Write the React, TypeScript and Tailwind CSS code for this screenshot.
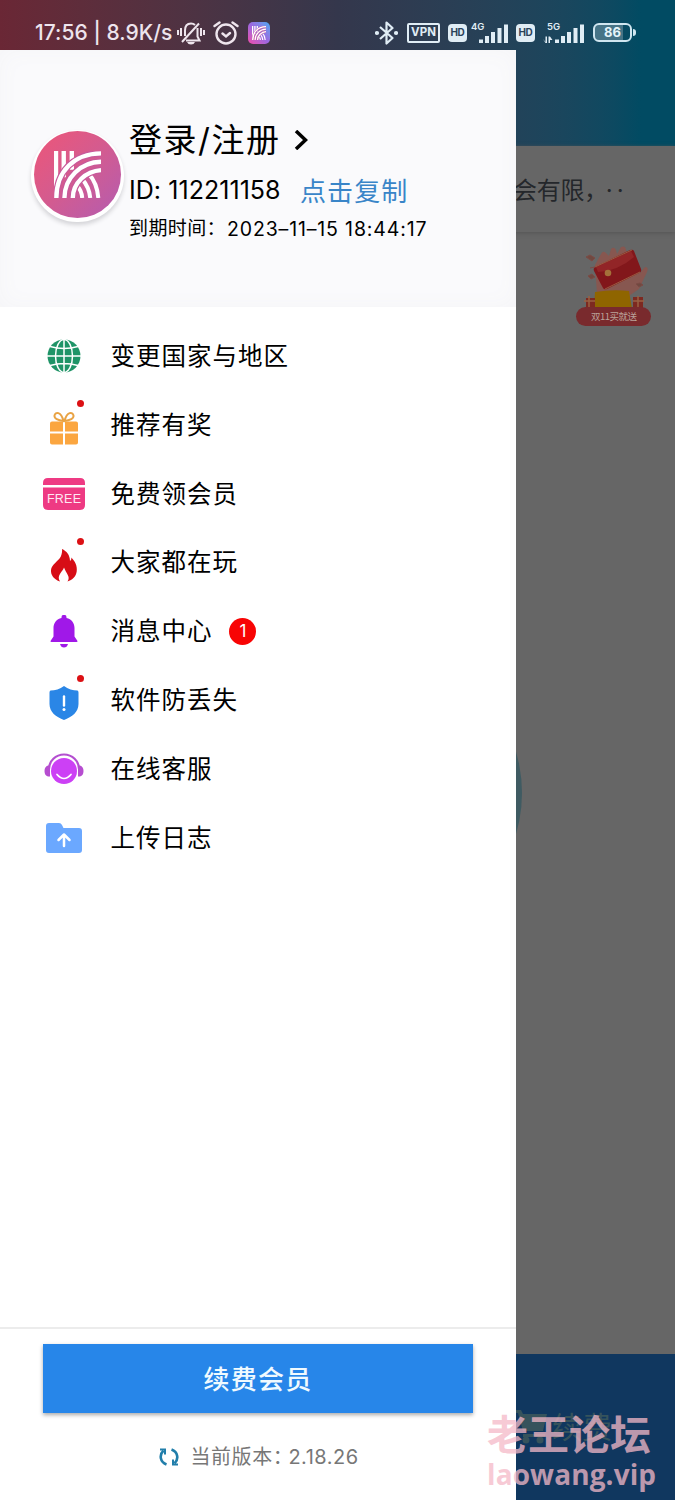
import React from 'react';

const GlobeIcon = () => (
  <svg width="34" height="34" viewBox="0 0 34 34" fill="none">
    <circle cx="17" cy="17" r="16.5" fill="#1f9467" />
    <g stroke="#fff" strokeWidth="1.5">
      <path d="M17 0v34M0 17h34M3 7.500q14 4 28 0M3 26.500q14-4 28 0" />
      <ellipse cx="17" cy="17" rx="8.500" ry="16.500" />
    </g>
  </svg>
);

const GiftIcon = () => (
  <svg width="30" height="34" viewBox="0 0 30 34" fill="none">
    <path d="M1 12.500q0-2 2-2h11v10H1zM16 10.500h11q2 0 2 2v8H16zM1 22.500h13v11H3q-2 0-2-2zM16 22.500h13v9q0 2-2 2H16z" fill="#fba640" />
    <path d="M14.500 10C9 9.500 5 7.500 5.500 4.500c.8-4 6.500-4 9 5.500zm1 0C21 9.500 25 7.500 24.500 4.500c-.8-4-6.500-4-9 5.500z" stroke="#e9a344" strokeWidth="2" />
  </svg>
);

const FreeIcon = () => (
  <svg width="42" height="32" viewBox="0 0 42 32">
    <path d="M0 7V5q0-5 5-5h32q5 0 5 5v2zM0 9.500h42V27q0 5-5 5H5q-5 0-5-5z" fill="#ee3a83" />
    <text x="4" y="25" fontSize="12.500" textLength="34" fill="#ffe8f2" fontFamily="Liberation Sans, sans-serif">FREE</text>
  </svg>
);

const FireIcon = () => (
  <svg width="28" height="33" viewBox="0 0 28 33">
    <path d="M12 0c4.500 2 8 6 8 12 1.200-.7 1.500-2 1.300-3.500C25 12 27.500 17 26.700 22.500 26 27.500 22.500 31 17.500 32.500c3.500-5-1.500-8-3.500-14-1 4-8 8-4 14C4 30.500.6 26 1 21 1.500 15.500 8.500 12 10.800 7.500 12 5 12.300 2 12 0z" fill="#d70d16" />
  </svg>
);

const BellIcon = () => (
  <svg width="28" height="33" viewBox="0 0 28 33" fill="#a018e8">
    <path d="M11.500 3V2.300a2.500 2.500 0 0 1 5 0V3c5 1 8 5 8 10v8.500l3 4.500q.3 1-1 1h-25q-1.300 0-1-1l3-4.500V13c0-5 3-9 8-10zM10 29h8q-1 3.500-4 3.500T10 29z" />
  </svg>
);

const ShieldIcon = () => (
  <svg width="30" height="34" viewBox="0 0 30 34">
    <path d="M15 0c4 3 9 4.500 13.500 4.500q1 .5 1 2V18c0 8-6.500 13-14.500 16C7 31 .5 26 .5 18V6.500q0-1.500 1-2C6 4.500 11 3 15 0z" fill="#2a86e6" />
    <path d="M15 10.500v9" stroke="#fff" strokeWidth="2.400" strokeLinecap="round" />
    <circle cx="15" cy="23.500" r="1.500" fill="#fff" />
  </svg>
);

const SupportIcon = () => (
  <svg width="40" height="32" viewBox="0 0 40 32" fill="none">
    <path d="M5 16a15 14.500 0 0 1 30 0" stroke="#b44fd0" strokeWidth="2.200" />
    <path d="M6 12.500v11H4q-3.500-1-3.500-5.500T4 12.500zM34 12.500v11h2q3.500-1 3.500-5.500T36 12.500z" fill="#b64dd0" />
    <circle cx="20" cy="18" r="13" fill="#cc40f5" />
    <path d="M13 21.500q7 8 14 0" stroke="#fff" strokeWidth="1.700" strokeLinecap="round" />
  </svg>
);

const FolderIcon = () => (
  <svg width="36" height="30" viewBox="0 0 36 30" fill="none">
    <path d="M3 0h10q2 0 3 2l1.500 3H33q3 0 3 3v19q0 3-3 3H3q-3 0-3-3V3q0-3 3-3z" fill="#6ba8ff" />
    <path d="M18 23V12M12.500 17l5.500-5.500 5.500 5.500" stroke="#fff" strokeWidth="2.500" strokeLinecap="round" strokeLinejoin="round" />
  </svg>
);

const KLogo = ({ size }: { size: number }) => (
  <svg width={size} height={size} viewBox="0 0 140 140" fill="none">
    <path d="M6 0v120M29 0v78M53 0v56" stroke="#fff" strokeWidth="13" />
    <path d="M66 102C78 112 83 125 84 140M84 84C98 100 106 120 108 140M102 66C120 86 130 112 132 140" stroke="#fff" strokeWidth="12" />
    <path d="M7 140C7 60 60 8 140 7M31 140C31 80 80 33 140 32M56 140C56 95 95 60 140 57" stroke="#c8599b" strokeWidth="20" />
    <path d="M7 140C7 60 60 8 140 7M31 140C31 80 80 33 140 32M56 140C56 95 95 60 140 57" stroke="#fff" strokeWidth="13" />
  </svg>
);

const Signal = ({ label, arrows }: { label: string; arrows?: boolean }) => (
  <svg width={arrows ? 42 : 38} height="24" viewBox={arrows ? '-4 0 42 24' : '0 0 38 24'} fill="#e0edf5">
    <text x="0" y="9" fontSize="9.500" fontWeight="600" fontFamily="Inter, sans-serif">{label}</text>
    <path d="M8 18.500h4V22H8zM14 15h4v7h-4zM20 11h4v11h-4zM26.500 7h4v15h-4zM33 3.500h4V22h-4z" />
    {arrows && <path d="M-4 18l2.500 3V15.500h1.500V22h-1.500zM1.500 15.500H3l2.500 3.500H3v3H1.500z" />}
  </svg>
);

const HdBadge = () => (
  <span className="flex h-[18px] w-[19px] items-center justify-center rounded-[4px] bg-[#e0edf5] text-[10px] font-bold tracking-tight text-[#29425a]">HD</span>
);

const StatusBar = () => (
  <div className="flex h-[50px] items-center pt-[15px] pl-[35px] text-[#eee5ed]">
    <span className="w-[142px] pt-[1px] text-[21px] font-medium tracking-[0.05px] whitespace-nowrap">17:56 | 8.9K/s</span>
    <svg width="28" height="24" viewBox="0 0 28 24" fill="none" stroke="currentColor" strokeWidth="2">
      <path d="M8 15V9.500C8 5 10.500 2.500 14 2.500q2.500 0 4 1.500M20.500 7v8.500l2 4H9M5 21L22 2.500M1 9v5M4 7v8M24 7v8M27 9v5" />
      <path d="M10 21h8q-1 2.500-4 2.500T10 21z" fill="currentColor" stroke="none" />
    </svg>
    <svg className="ml-[8px]" width="26" height="24" viewBox="0 0 26 24" fill="none" stroke="currentColor" strokeWidth="2.400" strokeLinecap="round">
      <circle cx="13" cy="13" r="9.500" />
      <path d="M1.500 5l5-3.500M24.500 5l-5-3.500M9.500 12.500l3.500 3 4-3.500" />
    </svg>
    <span className="ml-[9px] flex h-[22px] w-[22px] items-center justify-center rounded-[5px] bg-linear-to-tr from-[#f045a8] via-[#9a67e0] to-[#37a9f0]">
      <KLogo size={14} />
    </span>
    <svg className="ml-[105px]" width="23" height="24" viewBox="0 0 23 24" fill="none" stroke="#e0edf5" strokeWidth="2.200">
      <path d="M5 6l12.500 11L11.500 22.500V1.500L17.500 7 5 18" strokeLinejoin="round" />
      <circle cx="2" cy="12" r="1" fill="#e0edf5" /><circle cx="21" cy="12" r="1" fill="#e0edf5" />
    </svg>
    <span className="ml-[9px] flex h-[20px] w-[33px] items-center justify-center rounded-[2px] border-2 border-[#e0edf5] text-[11.5px] font-bold text-[#e0edf5]">VPN</span>
    <span className="ml-[8px]"><HdBadge /></span>
    <span className="ml-[4px]"><Signal label="4G" /></span>
    <span className="ml-[7px]"><HdBadge /></span>
    <span className="ml-[8px]"><Signal label="5G" arrows /></span>
    <span className="ml-[8px] flex h-[19px] w-[39px] items-center justify-center rounded-[6px] border-2 border-[#d0e6f0] bg-linear-to-r from-[#467487] from-80% to-transparent to-80% text-[13px] font-bold text-[#e5f5fb]">86</span>
    <span className="ml-[1px] h-[7px] w-[3px] rounded-r bg-[#d0e6f0]" />
  </div>
);

const RedPacket = () => (
  <svg width="78" height="82" viewBox="0 0 78 82">
    <path d="M22 48l-2-29 6-11q2-4 5-1l3 3 2-7q3-3 5 1l1 4 4-7q5-2 5 4l10 6 4 16 5-6q4 0 2 5l-8 17-13 9z" fill="#875750" />
    <path d="M20 21L55 4q3-1 4 1l7 18q1 3-2 4L32 43q-3 1-4-1l-9-17q-1-3 1-4z" fill="#82171b" />
    <path d="M21 21l35-16 3 6q-16 14-36 15z" fill="#922527" />
    <path d="M20 21L57 4M30 43l35-17" stroke="#9a5a40" fill="none" />
    <circle cx="33" cy="27" r="3.300" fill="#a4713a" />
    <path d="M20 46q18-3 34-1l3 18H19z" fill="#8f6500" />
    <path d="M11 52h9v12h-9zM58 51h10v13H58z" fill="#7d2920" />
    <path d="M14 50v13M9 55h11M63 50v13M58 55h11" stroke="#9a6041" strokeWidth="1.500" />
    <path d="M11 11l4-2 5 3-3 3zM15 22l5-1M13 30l4-2 3 3-4 2zM61 38l4-1 3 2-4 2z" fill="#704940" stroke="#7b4b45" />
    <rect x="1" y="61" width="75" height="19" rx="9.500" fill="#792a2d" />
    <text x="16" y="74" fontSize="9.500" textLength="46" fill="#bba29a" fontFamily="Noto Sans CJK SC, sans-serif">双11买就送</text>
  </svg>
);

const Backdrop = () => (
  <div className="flex h-[1500px] flex-col bg-[#666]">
    <div className="h-[146px] bg-linear-to-r from-[#6a2735] via-[#34374c] via-50% to-[#014b63] to-95%">
      <StatusBar />
    </div>
    <div className="flex h-[86px] items-center pt-[4px] pl-[513px] text-[24px] tracking-[-0.3px] whitespace-nowrap text-[#24272b] shadow-[0_1px_4px_#555]">
      会有限，<span className="-ml-[2px] tracking-[4px]">··</span>
    </div>
    <div className="flex justify-end pt-[14px] pr-[22px]">
      <RedPacket />
    </div>
    <div className="mt-[320px] ml-[232px] h-[290px] w-[290px] rounded-full bg-[#3f5b62]" />
    <div className="mt-auto flex h-[146px] items-center bg-[#10375f] pl-[515px] text-[30px] text-[#36535c]">
      <svg width="34" height="36" viewBox="0 0 34 36" fill="currentColor">
        <path d="M0 1h6l2 4h24l-4 17H8L3 4H0zM8 25h22v3H8z" />
        <circle cx="11" cy="31" r="3.500" /><circle cx="25" cy="31" r="3.500" />
      </svg>
      <span className="ml-[3px]">续费</span>
    </div>
  </div>
);

const menuItems = [
  { name: '变更国家与地区', icon: GlobeIcon },
  { name: '推荐有奖', icon: GiftIcon, dot: true },
  { name: '免费领会员', icon: FreeIcon },
  { name: '大家都在玩', icon: FireIcon, dot: true },
  { name: '消息中心', icon: BellIcon, count: 1 },
  { name: '软件防丢失', icon: ShieldIcon, dot: true },
  { name: '在线客服', icon: SupportIcon },
  { name: '上传日志', icon: FolderIcon },
];

const ProfileHeader = () => (
  <div className="flex h-[257px] bg-[#fafafc] pt-[69px] pl-[31px] shadow-[inset_0_0_22px_#f5f5f7]">
    <div className="mt-[11px] flex h-[92px] w-[93px] shrink-0 justify-center rounded-full bg-white pt-[1px] shadow-[0_3px_4px_#d4d4d8]">
      <div className="flex h-[87px] w-[87px] items-center justify-center rounded-full bg-linear-to-br from-[#ee5577] via-[#d35b90] to-[#b35bb0]">
        <KLogo size={47} />
      </div>
    </div>
    <div className="ml-[5px] whitespace-nowrap text-black">
      <div className="flex h-[44px] items-center text-[33px] tracking-[1.5px]">
        登录/注册
        <svg className="ml-[14px] -mt-[3px]" width="14" height="20" viewBox="0 0 14 20" fill="none" stroke="#000" strokeWidth="3.500">
          <path d="M2 1l9.500 9L2 19" />
        </svg>
      </div>
      <div className="flex h-[56px] items-center text-[25px]">
        <span className="w-[171px] tracking-[0.05px]">ID: 112211158</span>
        <span className="text-[26px] tracking-[1.1px] text-[#3985c8]">点击复制</span>
      </div>
      <div className="flex h-[21px] items-center text-[19px]">
        <span className="w-[98px] tracking-[0.4px]">到期时间：</span>
        <span className="text-[19.5px] tracking-[0.85px]">2023–11–15 18:44:17</span>
      </div>
    </div>
  </div>
);

const Drawer = () => (
  <aside className="absolute top-[50px] left-0 flex h-[1450px] w-[516px] flex-col bg-white">
    <ProfileHeader />
    <ul className="pt-[15px]">
      {menuItems.map((item) => (
        <li key={item.name} className="flex h-[68.8px] items-center text-black">
          <div className={item.dot ? 'relative mt-[5px] ml-[42px] flex w-[43px] justify-center' : 'ml-[42px] flex w-[43px] justify-center'}>
            <item.icon />
            {item.dot && <span className="absolute -top-[11px] right-px h-[7px] w-[7px] rounded-full bg-[#dc1014]" />}
          </div>
          <span className="ml-[25.5px] text-[24.5px] tracking-[0.98px]">{item.name}</span>
          {item.count && (
            <span className="ml-[17px] flex h-[27px] w-[27px] items-center justify-center rounded-full bg-[#f80404] text-[17px] text-white">{item.count}</span>
          )}
        </li>
      ))}
    </ul>
    <div className="mt-auto flex h-[173px] flex-col items-center border-t-2 border-[#ececec] pt-[15px]">
      <button className="h-[69px] w-[430px] bg-[#2786e9] pt-[2px] text-[26px] font-medium tracking-[1.2px] text-[#f0faff] shadow-[0_2px_4px_#aaa]">续费会员</button>
      <div className="mt-[29px] ml-[2px] flex h-[30px] items-center text-[20px] text-[#777]">
        <svg width="20" height="20" viewBox="0 0 20 20" fill="none" stroke="#217eaa" strokeWidth="2.600">
          <path d="M7.500 17.500C1 15 0 8 4.500 3.500M12.500 2.500C19 5 20 12 15.500 16.500" />
          <path d="M1 2.500h5v5M19 17.500h-5v-5" strokeWidth="2" />
        </svg>
        <span className="ml-[11px] w-[98px] tracking-[0.6px] whitespace-nowrap">当前版本：</span>
        <span className="tracking-[0.5px]">2.18.26</span>
      </div>
    </div>
  </aside>
);

const App: React.FC = () => {
  return (
    <div className="relative h-[1500px] w-[675px] overflow-hidden font-['Inter','Noto_Sans_CJK_SC',sans-serif]">
      <Backdrop />
      <Drawer />
      <div className="absolute top-[1409px] left-[487px] font-['Open_Sans','Noto_Sans_CJK_SC',sans-serif] font-bold whitespace-nowrap text-[#f5b9c8]/75">
        <div className="h-[46px] text-[41px] leading-[50px]">老王论坛</div>
        <div className="text-[28px] leading-[38px] tracking-[0.1px]">laowang.vip</div>
      </div>
    </div>
  );
};

export default App;
